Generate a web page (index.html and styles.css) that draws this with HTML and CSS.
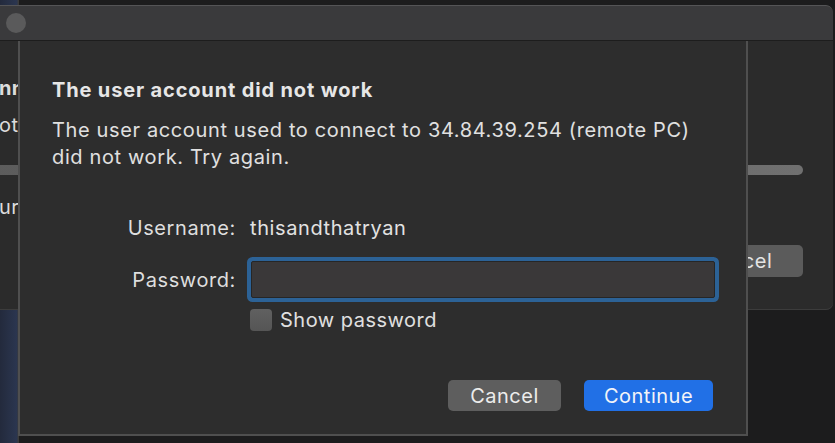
FILE: index.html
```html
<!DOCTYPE html>
<html lang="en">
<head>
<meta charset="utf-8">
<title>The user account did not work</title>
<link rel="stylesheet" href="styles.css">
</head>
<body>
<div class="window">
  <div class="titlebar"><span class="light"></span></div>
  <div class="win-body">
    <div class="frag bold">nn</div>
    <div class="frag gap-a">ot</div>
    <div class="progress"></div>
    <div class="frag gap-b">ur</div>
    <div class="win-actions"><span class="win-btn">Cancel</span></div>
  </div>
</div>

<div class="sheet">
  <h1 class="sheet-title">The user account did not work</h1>
  <p class="sheet-text">The user account used to connect to 34.84.39.254 (remote PC)<br>did not work. Try again.</p>
  <div class="fields">
    <div class="label">Username:</div>
    <div class="value">thisandthatryan</div>
    <label class="label pw-label" for="pw">Password:</label>
    <div class="pw-cell"><input id="pw" class="pw-input" type="password"></div>
    <div></div>
    <label class="check-row"><span class="checkbox"></span><span>Show password</span></label>
  </div>
  <div class="actions">
    <button class="btn btn-cancel" type="button">Cancel</button>
    <button class="btn btn-continue" type="button">Continue</button>
  </div>
</div>
</body>
</html>
```

FILE: styles.css
```css
* { box-sizing: border-box; }

html, body {
  margin: 0;
  padding: 0;
}

body {
  width: 835px;
  height: 443px;
  overflow: hidden;
  position: relative;
  font-family: "Inter", "Noto Sans", sans-serif;
  color: #e2e2e2;
  background:
    linear-gradient(to right, #232a3c 0, #2b3650 17px, #3a3a3a 18px, #3a3a3a 19px, #1c1c1d 19px);
}

/* window behind the sheet */
.window {
  position: absolute;
  left: -10px;
  top: 5px;
  width: 843px;
  height: 305px;
  background: #2b2b2b;
  border-radius: 0 7px 7px 0;
  overflow: hidden;
  box-shadow: inset 0 -1px 0 #3c3c3c;
}

.titlebar {
  height: 36px;
  background: #3a3a3c;
  border-top: 1px solid #545456;
  border-bottom: 1px solid #1d1d1d;
  display: flex;
  align-items: center;
  padding-left: 16px;
  border-top-right-radius: 7px;
}

.light {
  width: 20px;
  height: 20px;
  border-radius: 50%;
  background: #5a5a5b;
}

.win-body {
  display: flex;
  flex-direction: column;
  padding-left: 9px;
  padding-right: 30px;
}

.frag {
  height: 24px;
  line-height: 24px;
  font-size: 20px;
  letter-spacing: 0.4px;
  white-space: nowrap;
  color: #dcdcdc;
  margin-top: 35px;
}

.frag.bold { font-weight: 700; }
.frag.gap-a { margin-top: 13px; }
.frag.gap-b { margin-top: 20px; }

.progress {
  margin-top: 28px;
  margin-left: -9px;
  height: 10px;
  border-radius: 5px;
  background: linear-gradient(to right, #5c5c5c, #707070);
}

.win-actions {
  margin-top: 26px;
  display: flex;
  justify-content: flex-end;
}

.win-btn {
  width: 130px;
  height: 32px;
  border-radius: 5px;
  background: #5b5b5b;
  display: flex;
  align-items: center;
  justify-content: center;
  font-size: 20px;
  letter-spacing: 0.5px;
  color: #e4e4e4;
}

/* sheet */
.sheet {
  position: absolute;
  left: 18px;
  top: 41px;
  width: 730px;
  height: 395px;
  background: #2d2d2d;
  border: 2px solid #4f4f4f;
  border-top: none;
  padding: 37px 33px 0 32px;
  display: flex;
  flex-direction: column;
}

.sheet-title {
  margin: 0;
  font-size: 20px;
  line-height: 24px;
  font-weight: 700;
  letter-spacing: 0.85px;
  color: #e6e6e6;
}

.sheet-text {
  margin: 15px 0 0;
  font-size: 20px;
  line-height: 27px;
  letter-spacing: 0.63px;
  color: #e0e0e0;
}

.fields {
  margin-top: 45px;
  display: grid;
  grid-template-columns: 184px 1fr;
  column-gap: 11px;
  row-gap: 0;
  align-items: center;
  font-size: 20px;
  letter-spacing: 0.6px;
}

.label {
  text-align: right;
  line-height: 24px;
  color: #dedede;
}

.value {
  line-height: 24px;
  padding-left: 3px;
  color: #e2e2e2;
}

.pw-label { margin-top: 21px; }

.pw-cell {
  margin-top: 21px;
  padding-left: 4px;
  padding-right: 14px;
}

.pw-input {
  display: block;
  width: 464px;
  height: 37px;
  border: 1px solid #262626;
  border-radius: 2px;
  background: #3a3839;
  box-shadow: 0 0 0 4px #2c6296;
  outline: none;
  color: #e2e2e2;
  font-size: 18px;
  padding: 0 6px;
}

.check-row {
  margin-top: 10px;
  display: flex;
  align-items: center;
  gap: 8px;
  padding-left: 3px;
  line-height: 24px;
  letter-spacing: 0.5px;
  color: #e0e0e0;
}

.checkbox {
  width: 22px;
  height: 22px;
  border-radius: 4px;
  background: linear-gradient(#606060, #555555);
}

.actions {
  margin-top: 48px;
  display: flex;
  justify-content: flex-end;
  gap: 23px;
}

.btn {
  height: 31px;
  border: none;
  border-radius: 5px;
  font-family: inherit;
  font-size: 20px;
  letter-spacing: 0.5px;
  color: #ececec;
  padding: 0;
}

.btn-cancel {
  width: 113px;
  background: #5e5e5e;
}

.btn-continue {
  width: 129px;
  background: #2170e6;
  color: #f2f4f8;
}
```
